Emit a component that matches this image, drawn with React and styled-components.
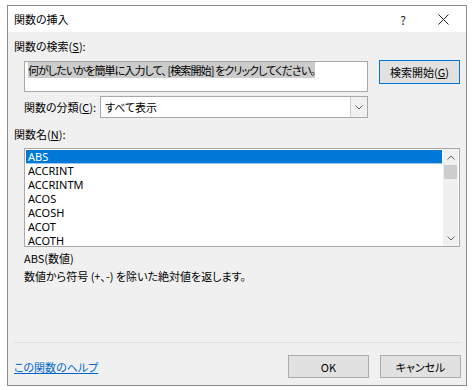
import React from "react";
import styled, { createGlobalStyle } from "styled-components";

const GlobalStyle = createGlobalStyle`
  body {
    margin: 0;
    background: #ffffff;
    font-family: "Noto Sans CJK JP", "Noto Sans", sans-serif;
    font-size: 11px;
    color: #000;
    font-feature-settings: "palt";
  }
`;

const functions = ["ABS", "ACCRINT", "ACCRINTM", "ACOS", "ACOSH", "ACOT", "ACOTH"];

const App = () => {
  return (
    <>
      <GlobalStyle />
      <Window>
        <TitleBar>
          <Title>関数の挿入</Title>
          <TitleButton>?</TitleButton>
          <TitleButton>
            <svg width="11" height="11" viewBox="0 0 11 11">
              <path d="M0.5 0.5 L10.5 10.5 M10.5 0.5 L0.5 10.5" stroke="#222" strokeWidth="1" />
            </svg>
          </TitleButton>
        </TitleBar>
        <Body>
          <Label>関数の検索(<u>S</u>):</Label>
          <SearchRow>
            <SearchBox>
              <Selected>何がしたいかを簡単に入力して、 [検索開始] をクリックしてください。</Selected>
            </SearchBox>
            <Button $primary>検索開始(<u>G</u>)</Button>
          </SearchRow>
          <CategoryRow>
            <CategoryLabel>関数の分類(<u>C</u>):</CategoryLabel>
            <Select>
              <SelectValue>すべて表示</SelectValue>
              <DropButton>
                <svg width="8" height="5" viewBox="0 0 8 5">
                  <path d="M0.5 0.5 L4 4 L7.5 0.5" fill="none" stroke="#606060" strokeWidth="1" />
                </svg>
              </DropButton>
            </Select>
          </CategoryRow>
          <Label $top={8}>関数名(<u>N</u>):</Label>
          <ListBox>
            <Items>
              {functions.map((name, i) => (
                <Item key={name} $selected={i === 0}>{name}</Item>
              ))}
            </Items>
            <ScrollBar>
              <Arrow>
                <svg width="8" height="5" viewBox="0 0 8 5">
                  <path d="M0.5 4.5 L4 1 L7.5 4.5" fill="none" stroke="#606060" strokeWidth="1" />
                </svg>
              </Arrow>
              <Track>
                <Thumb />
              </Track>
              <Arrow>
                <svg width="8" height="5" viewBox="0 0 8 5">
                  <path d="M0.5 0.5 L4 4 L7.5 0.5" fill="none" stroke="#606060" strokeWidth="1" />
                </svg>
              </Arrow>
            </ScrollBar>
          </ListBox>
          <Syntax>ABS(数値)</Syntax>
          <Description>数値から符号 (+、-) を除いた絶対値を返します。</Description>
          <Separator />
          <Footer>
            <HelpLink href="#">この関数のヘルプ</HelpLink>
            <Buttons>
              <Button>OK</Button>
              <Button>キャンセル</Button>
            </Buttons>
          </Footer>
        </Body>
      </Window>
    </>
  );
};

//STYLING

const Window = styled.div`
  box-sizing: border-box;
  margin: 5px 0 0 7px;
  width: 460px;
  height: 381px;
  border: 1px solid #8c8c8c;
  background: #f0f0f0;
  display: flex;
  flex-direction: column;
`;

const TitleBar = styled.div`
  height: 26px;
  background: #ffffff;
  display: flex;
  align-items: center;
  padding: 0 3px 0 6px;
`;

const Title = styled.div`
  flex: 1;
  font-size: 11px;
`;

const TitleButton = styled.div`
  width: 40px;
  display: flex;
  justify-content: center;
  align-items: center;
  font-size: 12px;
  color: #222;
`;

const Body = styled.div`
  flex: 1;
  display: flex;
  flex-direction: column;
  padding: 6px 5px 7px 6px;
`;

const Label = styled.div`
  line-height: 16px;
  margin-top: ${(p) => p.$top || 0}px;
`;

const SearchRow = styled.div`
  display: flex;
  align-items: flex-start;
  margin-top: 6px;
  padding-left: 10px;
`;

const SearchBox = styled.div`
  box-sizing: border-box;
  width: 344px;
  height: 31px;
  margin-top: 1px;
  border: 1px solid #a8a8a8;
  background: #ffffff;
  padding: 1px 3px;
  line-height: 15px;
  white-space: nowrap;
  overflow: hidden;
`;

const Selected = styled.span`
  background: #cccccc;
  letter-spacing: -0.9px;
`;

const Button = styled.div`
  box-sizing: border-box;
  width: 81px;
  height: ${(p) => (p.$primary ? 24 : 23)}px;
  margin-left: 11px;
  display: flex;
  align-items: center;
  justify-content: center;
  background: #e1e1e1;
  border: 1px solid ${(p) => (p.$primary ? "#0078d7" : "#adadad")};
  color: #000;
`;

const CategoryRow = styled.div`
  display: flex;
  align-items: center;
  margin-top: 4px;
  padding-left: 10px;
`;

const CategoryLabel = styled.div`
  width: 76px;
`;

const Select = styled.div`
  box-sizing: border-box;
  width: 268px;
  height: 22px;
  border: 1px solid #a8a8a8;
  background: #ffffff;
  display: flex;
  align-items: center;
`;

const SelectValue = styled.div`
  flex: 1;
  padding-left: 4px;
`;

const DropButton = styled.div`
  width: 16px;
  height: 100%;
  border-left: 1px solid #cfcfcf;
  background: #f0f0f0;
  display: flex;
  align-items: center;
  justify-content: center;
`;

const ListBox = styled.div`
  box-sizing: border-box;
  margin: 6px 0 0 10px;
  width: 436px;
  height: 99px;
  border: 1px solid #a8a8a8;
  background: #ffffff;
  display: flex;
  padding: 1px;
`;

const Items = styled.div`
  flex: 1;
  display: flex;
  flex-direction: column;
`;

const Item = styled.div`
  height: 14px;
  line-height: 14px;
  padding-left: 2px;
  font-family: "Noto Sans", sans-serif;
  background: ${(p) => (p.$selected ? "#0078d7" : "transparent")};
  color: ${(p) => (p.$selected ? "#ffffff" : "#000")};
  box-shadow: ${(p) => (p.$selected ? "inset 0 -1px 0 #99c9ef" : "none")};
`;

const ScrollBar = styled.div`
  width: 15px;
  margin: -1px 0 -1px 1px;
  background: #f0f0f0;
  display: flex;
  flex-direction: column;
`;

const Arrow = styled.div`
  height: 16px;
  display: flex;
  align-items: center;
  justify-content: center;
`;

const Track = styled.div`
  flex: 1;
`;

const Thumb = styled.div`
  margin: 0 1px;
  height: 14px;
  background: #cdcdcd;
`;

const Syntax = styled.div`
  margin: 3px 0 0 10px;
  line-height: 16px;
`;

const Description = styled.div`
  margin: 2px 0 0 10px;
  line-height: 16px;
`;

const Separator = styled.div`
  margin-top: auto;
  height: 1px;
  background: #dfdfdf;
`;

const Footer = styled.div`
  display: flex;
  align-items: center;
  margin-top: 12px;
`;

const HelpLink = styled.a`
  flex: 1;
  color: #0066cc;
  text-decoration: underline;
`;

const Buttons = styled.div`
  display: flex;
`;

export default App;
